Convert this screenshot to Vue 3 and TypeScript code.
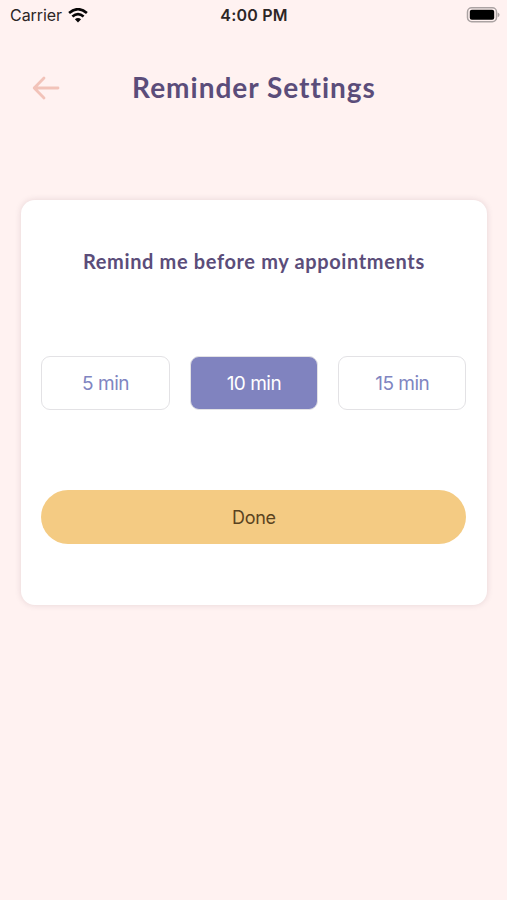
<script setup lang="ts">
import { ref } from 'vue'

const options: number[] = [5, 10, 15]
const selected = ref<number>(10)
</script>

<template>
  <main class="screen">
    <div class="status">
      <div class="network">
        <span class="carrier">Carrier</span>
        <svg class="wifi" width="20" height="15" viewBox="0 0 20 15" aria-hidden="true">
          <path d="M1.1 5.1Q10-2.7 18.9 5.1" />
          <path d="M4.4 8.6Q10 3.7 15.6 8.6" />
          <path class="dot" d="M6.9 11.2Q10 8.7 13.1 11.2L10 14.4Z" />
        </svg>
      </div>
      <span class="time">4:00 PM</span>
      <svg class="battery" width="34" height="17" viewBox="0 0 34 17" aria-hidden="true">
        <rect class="shell" x="1.5" y="0.8" width="29" height="14" rx="4.2" />
        <rect x="3.8" y="2.8" width="24.4" height="10" rx="2" />
        <path class="tip" d="M31.7 5.4Q33.6 6.2 33.6 7.8T31.7 10.2Z" />
      </svg>
    </div>

    <header class="header">
      <button class="back" type="button" aria-label="Back">
        <svg width="28" height="24" viewBox="0 0 28 24" aria-hidden="true">
          <path d="M26 12H2.2M12 2L2.2 12L12 22" />
        </svg>
      </button>
      <h1>Reminder Settings</h1>
    </header>

    <section class="card">
      <h2>Remind me before my appointments</h2>
      <div class="options">
        <button
          v-for="minutes in options"
          :key="minutes"
          type="button"
          class="option"
          :class="{ active: selected === minutes }"
          @click="selected = minutes"
        >{{ minutes }} min</button>
      </div>
      <button class="done" type="button">Done</button>
    </section>
  </main>
</template>

<style>
body {
  background: #fff2f1;
}
</style>

<style scoped>
* {
  box-sizing: border-box;
}
.screen {
  min-height: 900px;
  background: #fff2f1;
  font-family: Inter, sans-serif;
}
.status {
  display: grid;
  grid-template-columns: 1fr auto 1fr;
  align-items: center;
  height: 30px;
  padding: 0 7px 0 10px;
  color: #2c2626;
}
.network {
  display: flex;
  align-items: center;
  gap: 6px;
}
.carrier {
  font-size: 16px;
  letter-spacing: -0.05px;
}
.wifi {
  fill: none;
  stroke: #080606;
  stroke-width: 2.6;
}
.wifi .dot {
  fill: #080606;
  stroke: none;
}
.time {
  margin-right: 2px;
  font-size: 16px;
  font-weight: 600;
  letter-spacing: 0.2px;
}
.battery {
  justify-self: end;
  fill: #000;
}
.battery .shell {
  fill: none;
  stroke: #aba3a3;
  stroke-width: 1.5;
}
.battery .tip {
  fill: #aba3a3;
}
.header {
  display: grid;
  grid-template-columns: 28px 1fr 28px;
  align-items: center;
  height: 60px;
  margin-top: 28px;
  padding: 0 32px;
}
button {
  margin: 0;
  padding: 0;
  border: 0;
  background: none;
  font-family: inherit;
}
.back {
  display: flex;
}
.back path {
  fill: none;
  stroke: #f2c3b9;
  stroke-width: 2.8;
  stroke-linecap: round;
  stroke-linejoin: round;
}
h1,
h2 {
  margin: 0;
  color: #5b4d7a;
  font-family: Lato, sans-serif;
  font-weight: 700;
  text-align: center;
  white-space: nowrap;
}
h1 {
  padding: 0 0 2px 1px;
  font-size: 28px;
  line-height: 36px;
  letter-spacing: 1px;
}
.card {
  height: 404.5px;
  margin: 82px 20px 0 21px;
  padding: 47px 20.6px 0 20.4px;
  border-radius: 14px;
  background: #fff;
  box-shadow: 0 0 6px rgba(90, 50, 70, 0.15);
}
h2 {
  font-size: 20px;
  line-height: 28px;
  letter-spacing: 0.63px;
}
.options {
  display: grid;
  grid-template-columns: repeat(3, 1fr);
  gap: 20px;
  margin-top: 81px;
}
.option {
  height: 54px;
  border: 1.5px solid #e3e2e5;
  border-radius: 9px;
  color: #8085c1;
  font-size: 19px;
  letter-spacing: -0.5px;
}
.option.active {
  background: #8083bf;
  color: #fff;
}
.done {
  display: block;
  width: 100%;
  height: 54px;
  margin-top: 80px;
  border-radius: 27px;
  background: #f4cb83;
  color: #5a431f;
  font-size: 18px;
  letter-spacing: -0.3px;
}
</style>
